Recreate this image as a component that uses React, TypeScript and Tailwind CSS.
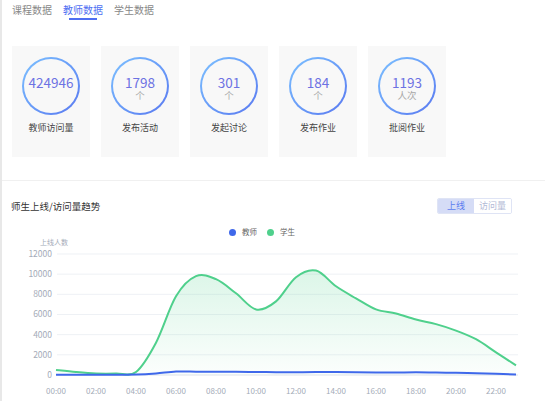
import React from 'react'

const stats = [
  { value: '424946', unit: '', label: '教师访问量' },
  { value: '1798', unit: '个', label: '发布活动' },
  { value: '301', unit: '个', label: '发起讨论' },
  { value: '184', unit: '个', label: '发布作业' },
  { value: '1193', unit: '人次', label: '批阅作业' },
]

const students = [500, 300, 150, 150, 300, 3200, 7800, 9800, 9500, 8100, 6500, 7300, 9700, 10350, 8800, 7600, 6500, 6100, 5500, 5050, 4400, 3550, 2250, 950]
const teachers = [30, 30, 30, 30, 40, 150, 350, 330, 320, 330, 300, 280, 270, 300, 290, 270, 250, 240, 280, 250, 220, 180, 120, 60]

const X0 = 56
const STEP = 20
const Y0 = 376
const PER = 20.17 / 2000

function toPoints(data: number[]) {
  return data.map((v, i) => [X0 + i * STEP, Y0 - v * PER] as [number, number])
}

// catmull-rom -> cubic bezier
function smoothPath(pts: [number, number][]) {
  let d = `M${pts[0][0]},${pts[0][1]}`
  for (let i = 0; i < pts.length - 1; i++) {
    const p0 = pts[i - 1] || pts[i]
    const p1 = pts[i]
    const p2 = pts[i + 1]
    const p3 = pts[i + 2] || p2
    const c1x = p1[0] + (p2[0] - p0[0]) / 6
    const c1y = p1[1] + (p2[1] - p0[1]) / 6
    const c2x = p2[0] - (p3[0] - p1[0]) / 6
    const c2y = p2[1] - (p3[1] - p1[1]) / 6
    d += ` C${c1x.toFixed(1)},${c1y.toFixed(1)} ${c2x.toFixed(1)},${c2y.toFixed(1)} ${p2[0]},${p2[1].toFixed(1)}`
  }
  return d
}

function StatCard({ value, unit, label }: { value: string; unit: string; label: string }) {
  return (
    <div className="w-[78px] h-[111px] bg-[#f8f8f8] flex flex-col items-center pt-[11px]">
      <div className="w-[58px] h-[58px] rounded-full p-[2px] bg-gradient-to-br from-[#7cc0ff] to-[#5a78f0]">
        <div className="w-full h-full rounded-full bg-[#f8f8f8] flex flex-col items-center pt-[16px]">
          <span className="text-[13.5px] leading-[14px] text-[#6d72e3]">{value}</span>
          {unit && <span className="mt-[1px] text-[9.5px] leading-[10px] text-[#a8a8a8]">{unit}</span>}
        </div>
      </div>
      <span className="mt-[7px] text-[9px] leading-[12px] text-[#444]">{label}</span>
    </div>
  )
}

function TrendChart() {
  const sp = toPoints(students)
  const tp = toPoints(teachers)
  const greenLine = smoothPath(sp)
  const greenArea = `${greenLine} L${sp[sp.length - 1][0]},${Y0} L${sp[0][0]},${Y0} Z`
  const yTicks = [0, 2000, 4000, 6000, 8000, 10000, 12000]
  const xTicks = Array.from({ length: 12 }, (_, i) => i * 2)

  return (
    <svg width="543" height="163" viewBox="2 238 543 163" className="block">
      <defs>
        <linearGradient id="greenFill" x1="0" y1="0" x2="0" y2="1">
          <stop offset="0" stopColor="#4fd08c" stopOpacity="0.2" />
          <stop offset="1" stopColor="#4fd08c" stopOpacity="0.02" />
        </linearGradient>
      </defs>
      <text x="54" y="246" textAnchor="middle" fontSize="7" fill="#a4abb8">上线人数</text>
      {yTicks.map((t) => {
        const y = Y0 - t * PER
        return (
          <g key={t}>
            <line x1="57" x2="518" y1={y} y2={y} stroke={t === 0 ? '#dde2ea' : '#eef1f5'} strokeWidth="1" />
            <text x="52" y={y + 3} textAnchor="end" fontSize="8.5" fill="#a4abb8">{t}</text>
          </g>
        )
      })}
      {xTicks.map((h) => (
        <text key={h} x={X0 + h * STEP} y="395" textAnchor="middle" fontSize="8" fill="#a4abb8">
          {String(h).padStart(2, '0')}:00
        </text>
      ))}
      <path d={greenArea} fill="url(#greenFill)" />
      <path d={greenLine} fill="none" stroke="#4fd08c" strokeWidth="2" />
      <path d={smoothPath(tp)} fill="none" stroke="#3f68ea" strokeWidth="2" />
    </svg>
  )
}

export default function App() {
  return (
    <div
      className="w-[545px] h-[401px] overflow-hidden bg-white border-l-2 border-[#e8e8e8]"
      style={{ fontFamily: '"Noto Sans CJK SC", "Noto Sans", sans-serif' }}
    >
      {/* Tabs */}
      <div className="h-[30px] flex gap-[11px] pl-[10px] pt-[3px]">
        {['课程数据', '教师数据', '学生数据'].map((t, i) => (
          <div key={t} className="flex flex-col items-center">
            <span className={`text-[10px] leading-[14px] ${i === 1 ? 'text-[#4e6ef2]' : 'text-[#888]'}`}>{t}</span>
            <span className={`w-[28px] h-[2px] mt-[1px] ${i === 1 ? 'bg-[#4e6ef2]' : 'bg-transparent'}`} />
          </div>
        ))}
      </div>

      {/* Stats */}
      <div className="flex gap-[11px] pl-[10px] pt-[16px] pb-[23px] border-b border-[#f0f0f0]">
        {stats.map((s) => (
          <StatCard key={s.label} {...s} />
        ))}
      </div>

      {/* Chart */}
      <div className="pt-[17px]">
        <div className="h-[16px] flex items-center justify-between pl-[9px] pr-[33px]">
          <span className="text-[9.5px] text-[#333]">师生上线/访问量趋势</span>
          <div className="flex h-[16px] rounded-[2px] border border-[#dfe4f5] overflow-hidden">
            <span className="w-[36px] flex items-center justify-center bg-[#d5dcf6] text-[9px] text-[#5b7cf0]">上线</span>
            <span className="w-[37px] flex items-center justify-center bg-white text-[9px] text-[#b3bad6]">访问量</span>
          </div>
        </div>
        <div className="h-[10px] mt-[13px] flex items-center justify-center gap-[10px] pr-[23px]">
          <div className="flex items-center gap-[6px]">
            <span className="w-[7px] h-[7px] rounded-full bg-[#3f68ea]" />
            <span className="text-[7.5px] text-[#666]">教师</span>
          </div>
          <div className="flex items-center gap-[6px]">
            <span className="w-[7px] h-[7px] rounded-full bg-[#4fd08c]" />
            <span className="text-[7.5px] text-[#666]">学生</span>
          </div>
        </div>
        <TrendChart />
      </div>
    </div>
  )
}
